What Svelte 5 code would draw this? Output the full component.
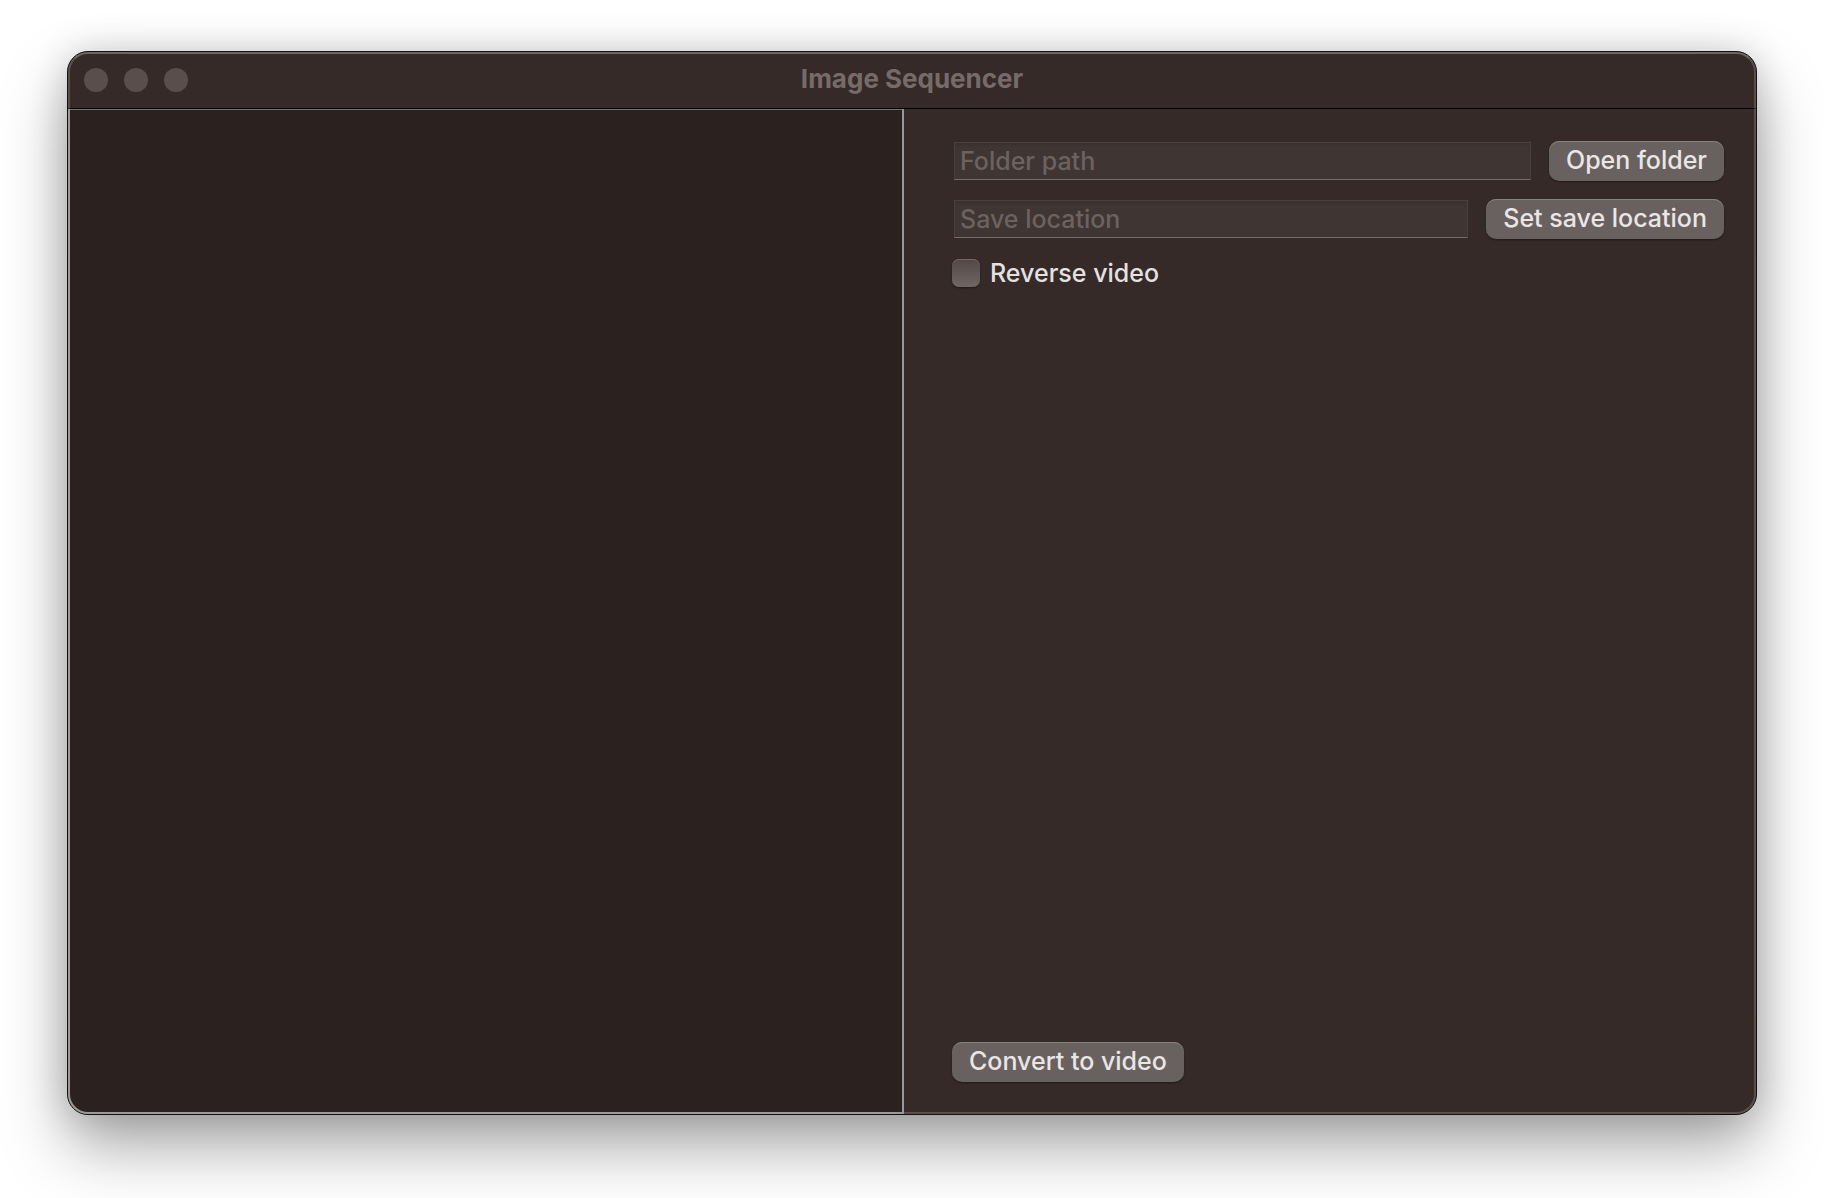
<script>
  let folder = $state('');
  let saveLocation = $state('');
  let reverse = $state(false);
</script>

<div class="desktop">
  <main class="window">
    <header class="titlebar">
      <div class="lights">
        <button class="light" aria-label="Close"></button>
        <button class="light" aria-label="Minimize"></button>
        <button class="light" aria-label="Zoom"></button>
      </div>
      <h1>Image Sequencer</h1>
    </header>
    <div class="content">
      <section class="preview" aria-label="Image list"></section>
      <section class="settings">
        <div class="row">
          <input class="field" type="text" placeholder="Folder path" aria-label="Folder path" bind:value={folder} />
          <button class="push">Open folder</button>
        </div>
        <div class="row">
          <input class="field" type="text" placeholder="Save location" aria-label="Save location" bind:value={saveLocation} />
          <button class="push">Set save location</button>
        </div>
        <label class="check">
          <input type="checkbox" bind:checked={reverse} />
          Reverse video
        </label>
        <button class="push convert">Convert to video</button>
      </section>
    </div>
  </main>
</div>

<style>
  :global(body) {
    background: #fff;
    font-family: Inter, "Liberation Sans", sans-serif;
  }

  .desktop {
    box-sizing: border-box;
    min-height: 100vh;
    padding: 51px 67px 83px;
    display: flex;
    overflow: hidden;
  }

  .window {
    position: relative;
    flex: 1;
    display: flex;
    flex-direction: column;
    border: 1px solid #111;
    border-radius: 21px;
    background: #352a28;
    box-shadow: 0 32px 64px rgba(0, 0, 0, 0.34), 0 0 36px rgba(0, 0, 0, 0.16);
  }

  /* light rim along the inside of the window edge */
  .window::after {
    content: "";
    position: absolute;
    inset: 0;
    border: 2px solid rgba(255, 255, 255, 0.18);
    border-top-color: rgba(255, 255, 255, 0.28);
    border-radius: 20px;
    pointer-events: none;
  }

  .titlebar {
    height: 56px;
    display: grid;
    grid-template-columns: 1fr auto 1fr;
    align-items: center;
    border-bottom: 1px solid #000;
  }

  .lights {
    display: flex;
    gap: 16px;
    padding-left: 16px;
  }

  .light {
    width: 24px;
    height: 24px;
    padding: 0;
    border: 0;
    border-radius: 50%;
    background: #594e4c;
  }

  h1 {
    margin: 0;
    padding-bottom: 2px;
    font-size: 26px;
    line-height: 32px;
    font-weight: 700;
    color: #776b69;
  }

  .content {
    flex: 1;
    display: grid;
    grid-template-columns: 836fr 852fr;
  }

  .preview {
    background: #2b211f;
    border: 2px solid #99979a;
    border-top: 1px solid #757170;
    border-left-color: #868486;
    border-bottom-color: #868486;
    border-bottom-left-radius: 20px;
  }

  .settings {
    display: flex;
    flex-direction: column;
    gap: 18px;
    padding: 32px 32px 32px 48px;
  }

  .row {
    display: flex;
    align-items: center;
    gap: 18px;
    padding-left: 2px;
  }

  .field {
    box-sizing: border-box;
    flex: 1;
    min-width: 0;
    height: 38px;
    padding: 0 5px;
    border: 1px solid #4a403e;
    border-bottom-color: #766d6b;
    border-radius: 0;
    outline: none;
    background: #3f3533;
    box-shadow: inset 0 2px 2px rgba(0, 0, 0, 0.08);
    font: 500 25px/32px Inter, "Liberation Sans", sans-serif;
    color: #e5e1e0;
  }

  .field::placeholder {
    color: #6c6260;
    opacity: 1;
  }

  .push {
    height: 40px;
    padding: 0 17px 2px;
    border: 0;
    border-radius: 10px;
    background: #696160;
    box-shadow: inset 0 1px 0 #878180, 0 1px 2px rgba(0, 0, 0, 0.4);
    font: 500 25px/32px Inter, "Liberation Sans", sans-serif;
    color: #e9e6e5;
    white-space: nowrap;
  }

  .check {
    display: flex;
    align-items: center;
    align-self: flex-start;
    gap: 10px;
    font-size: 25px;
    line-height: 32px;
    font-weight: 500;
    color: #e5e1e0;
  }

  .check input {
    appearance: none;
    width: 28px;
    height: 28px;
    margin: 0;
    border-radius: 7px;
    background: linear-gradient(#524745, #706765);
    box-shadow: inset 0 1px 0 #726967, 0 1px 2px rgba(0, 0, 0, 0.4);
  }

  .check input:checked {
    background: #0a7aff;
  }

  .convert {
    align-self: flex-start;
    margin-top: auto;
  }
</style>
